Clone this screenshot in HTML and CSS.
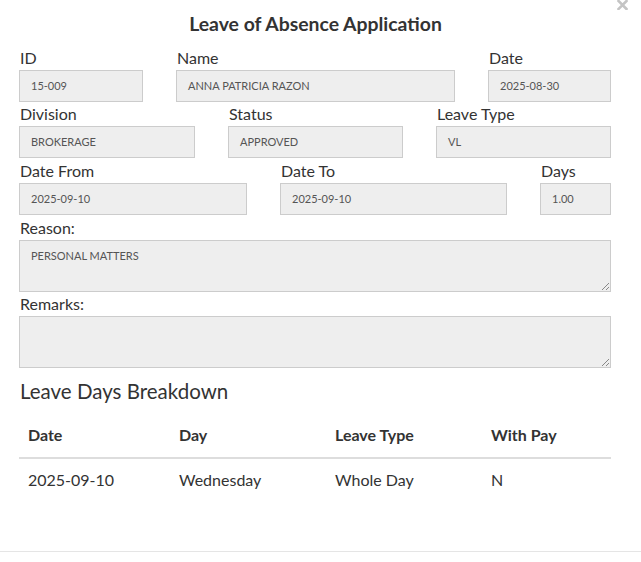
FILE: index.html
```html
<!DOCTYPE html>
<html>
<head>
<meta charset="utf-8">
<link rel="stylesheet" href="styles.css">
</head>
<body>
<div class="modal">
  <svg class="close" width="11" height="10" viewBox="0 0 11 10" aria-label="close"><path d="M1.5 1 L9.5 9 M9.5 1 L1.5 9" stroke="#c4c4c4" stroke-width="2.6" stroke-linecap="square"/></svg>
  <h2 class="title">Leave of Absence Application</h2>
  <div class="row r1">
    <div class="field"><label>ID</label><div class="input">15-009</div></div>
    <div class="field"><label>Name</label><div class="input">ANNA PATRICIA RAZON</div></div>
    <div class="field"><label>Date</label><div class="input">2025-08-30</div></div>
  </div>
  <div class="row r2">
    <div class="field"><label>Division</label><div class="input">BROKERAGE</div></div>
    <div class="field"><label>Status</label><div class="input">APPROVED</div></div>
    <div class="field"><label>Leave Type</label><div class="input">VL</div></div>
  </div>
  <div class="row r3">
    <div class="field"><label>Date From</label><div class="input">2025-09-10</div></div>
    <div class="field"><label>Date To</label><div class="input">2025-09-10</div></div>
    <div class="field"><label>Days</label><div class="input">1.00</div></div>
  </div>
  <div class="field"><label class="tl">Reason:</label><div class="textarea">PERSONAL MATTERS<span class="grip"></span></div></div>
  <div class="field"><label>Remarks:</label><div class="textarea"><span class="grip"></span></div></div>
  <h3 class="sub">Leave Days Breakdown</h3>
  <table class="tbl">
    <thead>
      <tr><th class="c1">Date</th><th class="c2">Day</th><th class="c3">Leave Type</th><th class="c4">With Pay</th></tr>
    </thead>
    <tbody>
      <tr><td>2025-09-10</td><td>Wednesday</td><td>Whole Day</td><td>N</td></tr>
    </tbody>
  </table>
</div>
<div class="footer-line"></div>
</body>
</html>
```
FILE: styles.css
```css
* { box-sizing: border-box; }
html, body { margin: 0; padding: 0; background: #fff; }
body {
  font-family: "Lato", "Open Sans", sans-serif;
  color: #333;
  width: 641px;
  height: 562px;
  position: relative;
  overflow: hidden;
}
.modal {
  position: relative;
  padding: 0 30px 0 19px;
}
.close {
  position: absolute;
  right: 13px;
  top: 0;
  display: block;
}
.title {
  margin: 0;
  padding: 11px 0 9px 1px;
  text-align: center;
  font-size: 19.4px;
  font-weight: 700;
  line-height: 26px;
  height: 46px;
  color: #333;
}
.row {
  display: grid;
  column-gap: 33px;
}
.r1 { grid-template-columns: 124px 279px 123px; }
.r2 { grid-template-columns: 176px 175px 175px; }
.r3 { grid-template-columns: 228px 227px 71px; }
.field label {
  display: block;
  font-size: 16px;
  line-height: 24px;
  height: 24px;
  margin: 0 0 0 1px;
  color: #333;
}
.r3 .field label { height: 25px; line-height: 25px; }
.field label.tl { height: 25px; line-height: 25px; }
.input {
  height: 32px;
  background: #eee;
  border: 1px solid #ccc;
  font-size: 11px;
  line-height: 30px;
  padding-left: 11px;
  color: #555;
  white-space: nowrap;
}
.textarea {
  position: relative;
  height: 52px;
  background: #eee;
  border: 1px solid #ccc;
  font-size: 11px;
  line-height: 16px;
  padding: 7px 11px;
  color: #555;
}
.grip {
  position: absolute;
  right: 1px;
  bottom: 1px;
  width: 7px;
  height: 7px;
  background: linear-gradient(135deg, transparent 45%, #888 45%, #888 55%, transparent 55%, transparent 75%, #888 75%, #888 85%, transparent 85%);
}
.sub {
  margin: 9px 0 0 1px;
  font-size: 20.5px;
  font-weight: 400;
  line-height: 28px;
  color: #333;
}
.tbl {
  width: 592px;
  border-collapse: collapse;
  margin-top: 10px;
  font-size: 16px;
}
.tbl th {
  text-align: left;
  font-weight: 700;
  padding: 10px 9px 12px;
  line-height: 20px;
  border-bottom: 2px solid #ddd;
}
.tbl td {
  padding: 11px 9px 8px;
  line-height: 20px;
}
.c1 { width: 151px; }
.c2 { width: 156px; }
.c3 { width: 156px; }
.footer-line {
  position: absolute;
  left: 0;
  right: 0;
  top: 551px;
  height: 1px;
  background: #e5e5e5;
}
```
